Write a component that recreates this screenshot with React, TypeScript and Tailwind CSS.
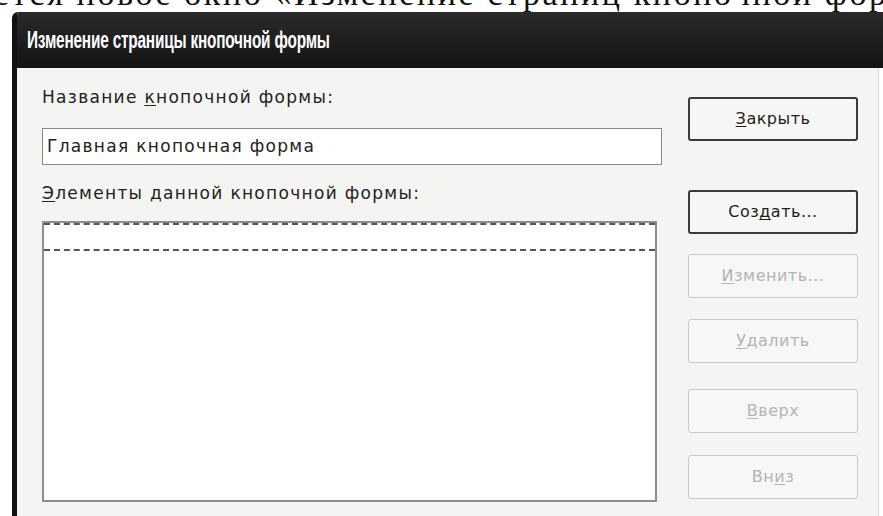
import React from "react";

// Access switchboard page editor dialog, with a strip of the book text above it

function Hotkey({ text, at }: { text: string; at: number }) {
  return (
    <>
      {text.slice(0, at)}
      <span className="underline underline-offset-2">{text[at]}</span>
      {text.slice(at + 1)}
    </>
  );
}

function DialogButton({ label, at, disabled, className = "" }) {
  return (
    <button
      className={`w-[170px] h-[44px] rounded-[3px] text-[16px] tracking-[0.5px] ${
        disabled
          ? "border border-[#c9c9c9] text-[#b4b4b4] bg-[#f7f7f5]"
          : "border-2 border-[#3a3a3a] text-[#1e1e1e] bg-[#f6f6f4]"
      } ${className}`}
    >
      <Hotkey text={label} at={at} />
    </button>
  );
}

export default function App() {
  return (
    <div className="w-[883px] h-[516px] overflow-hidden bg-white flex flex-col font-['DejaVu_Sans',sans-serif]">
      <div className="h-[12px] overflow-hidden shrink-0">
        <p className="whitespace-nowrap font-['Liberation_Serif',serif] text-[34px] leading-[34px] tracking-[2.6px] -mt-[23px] -ml-[6px] text-[#111]">
          ется новое окно «Изменение страниц кнопочной формы»
        </p>
      </div>

      <div className="ml-[12px] flex-1 flex flex-col border-l-[5px] border-[#111] rounded-tl-[6px] overflow-hidden">
        <div className="h-[56px] shrink-0 bg-gradient-to-b from-[#2a2a2a] to-[#141414] flex items-center pl-[10px]">
          <span className="inline-block origin-left scale-x-[0.64] whitespace-nowrap text-white font-['Liberation_Sans',sans-serif] font-bold text-[24px] tracking-[-0.3px]">
            Изменение страницы кнопочной формы
          </span>
        </div>

        <div className="flex-1 bg-[#f4f4f2] flex border-r border-[#d8d8d8] mr-[4px]">
          <div className="w-[645px] pl-[25px] pt-[18px] flex flex-col">
            <div className="text-[17px] tracking-[1.3px] text-[#222] h-[22px] leading-[22px] whitespace-nowrap">
              <Hotkey text="Название кнопочной формы:" at={9} />
            </div>
            <div className="mt-[20px] h-[37px] w-[620px] bg-white border border-[#8a8a8a] flex items-center pl-[4px] text-[17px] tracking-[1.3px] text-[#222]">
              Главная кнопочная форма
            </div>
            <div className="mt-[17px] text-[17px] tracking-[1.3px] text-[#222] h-[22px] leading-[22px] whitespace-nowrap">
              <Hotkey text="Элементы данной кнопочной формы:" at={0} />
            </div>
            <div className="mt-[17px] h-[281px] w-[615px] bg-white border-2 border-[#8e8e8e]">
              <div className="h-[28px] border-y-2 border-dashed border-[#555]"></div>
            </div>
          </div>

          <div className="pl-[26px] pt-[29px] flex flex-col">
            <DialogButton label="Закрыть" at={0} />
            <DialogButton label="Создать..." at={3} className="mt-[49px]" />
            <DialogButton label="Изменить..." at={0} disabled className="mt-[20px]" />
            <DialogButton label="Удалить" at={0} disabled className="mt-[21px]" />
            <DialogButton label="Вверх" at={0} disabled className="mt-[26px]" />
            <DialogButton label="Вниз" at={2} disabled className="mt-[22px]" />
          </div>
        </div>
      </div>
    </div>
  );
}
